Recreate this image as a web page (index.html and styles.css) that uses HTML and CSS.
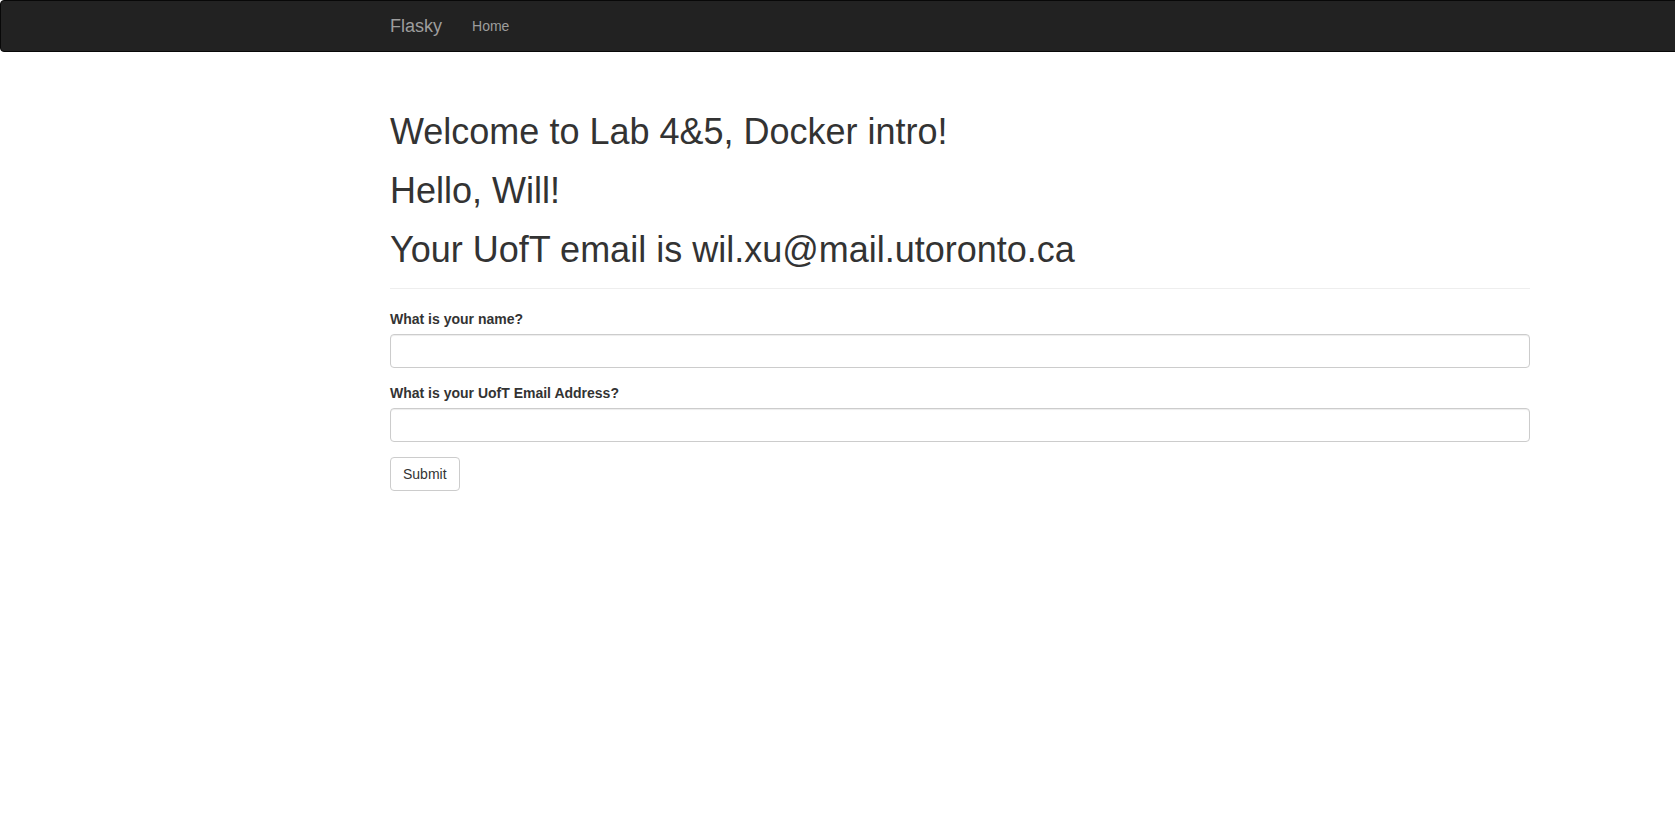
FILE: index.html
```html
<!DOCTYPE html>
<html lang="en">
<head>
<meta charset="utf-8">
<title>Flasky</title>
<link rel="stylesheet" href="styles.css">
</head>
<body>
<div class="page">
  <div class="navbar">
    <div class="container nav-inner">
      <a class="brand" href="#">Flasky</a>
      <ul class="nav">
        <li><a href="#">Home</a></li>
      </ul>
    </div>
  </div>
  <div class="container main">
    <div class="page-header">
      <h1>Welcome to Lab 4&amp;5, Docker intro!</h1>
      <h1>Hello, Will!</h1>
      <h1>Your UofT email is wil.xu@mail.utoronto.ca</h1>
    </div>
    <form class="form">
      <div class="form-group">
        <label class="control-label" for="name">What is your name?</label>
        <input class="form-control" id="name" type="text">
      </div>
      <div class="form-group">
        <label class="control-label" for="email">What is your UofT Email Address?</label>
        <input class="form-control" id="email" type="text">
      </div>
      <input class="btn" type="submit" value="Submit">
    </form>
  </div>
</div>
</body>
</html>
```
FILE: styles.css
```css
html {
  overflow: hidden;
}
body {
  margin: 0;
  font-family: "Liberation Sans", Arial, Helvetica, sans-serif;
  font-size: 14px;
  line-height: 20px;
  color: #333;
  background: #fff;
}
.page {
  width: 1920px;
}
.container {
  width: 1170px;
  box-sizing: border-box;
  padding: 0 15px;
  margin: 0 auto;
}
.navbar {
  background: #222;
  border: 1px solid #080808;
  border-radius: 4px;
  min-height: 50px;
  margin-bottom: 20px;
}
.nav-inner {
  display: flex;
  align-items: flex-start;
}
.brand {
  display: block;
  height: 50px;
  box-sizing: border-box;
  padding: 15px;
  margin-left: -15px;
  font-size: 18px;
  line-height: 20px;
  color: #9d9d9d;
  text-decoration: none;
}
.nav {
  list-style: none;
  margin: 0;
  padding: 0;
  display: flex;
}
.nav a {
  display: block;
  padding: 15px;
  line-height: 20px;
  font-size: 14px;
  color: #9d9d9d;
  text-decoration: none;
}
.main {
  display: flow-root;
}
.page-header {
  margin: 40px 0 20px;
  padding-bottom: 9px;
  border-bottom: 1px solid #eee;
}
h1 {
  font-size: 36px;
  font-weight: 500;
  line-height: 39px;
  margin: 20px 0 10px;
  color: #333;
}
.page-header h1:first-child {
  margin-top: 0;
}
.form-group {
  margin-bottom: 15px;
}
.control-label {
  display: inline-block;
  max-width: 100%;
  margin-bottom: 5px;
  font-weight: bold;
}
.form-control {
  display: block;
  width: 100%;
  height: 34px;
  box-sizing: border-box;
  padding: 6px 12px;
  font-family: inherit;
  font-size: 14px;
  line-height: 20px;
  color: #555;
  background: #fff;
  border: 1px solid #ccc;
  border-radius: 4px;
  box-shadow: inset 0 1px 1px rgba(0,0,0,.075);
  margin: 0;
}
.btn {
  display: inline-block;
  padding: 6px 12px;
  margin: 0;
  font-family: inherit;
  font-size: 14px;
  line-height: 20px;
  color: #333;
  background: #fff;
  border: 1px solid #ccc;
  border-radius: 4px;
  cursor: pointer;
}
```
